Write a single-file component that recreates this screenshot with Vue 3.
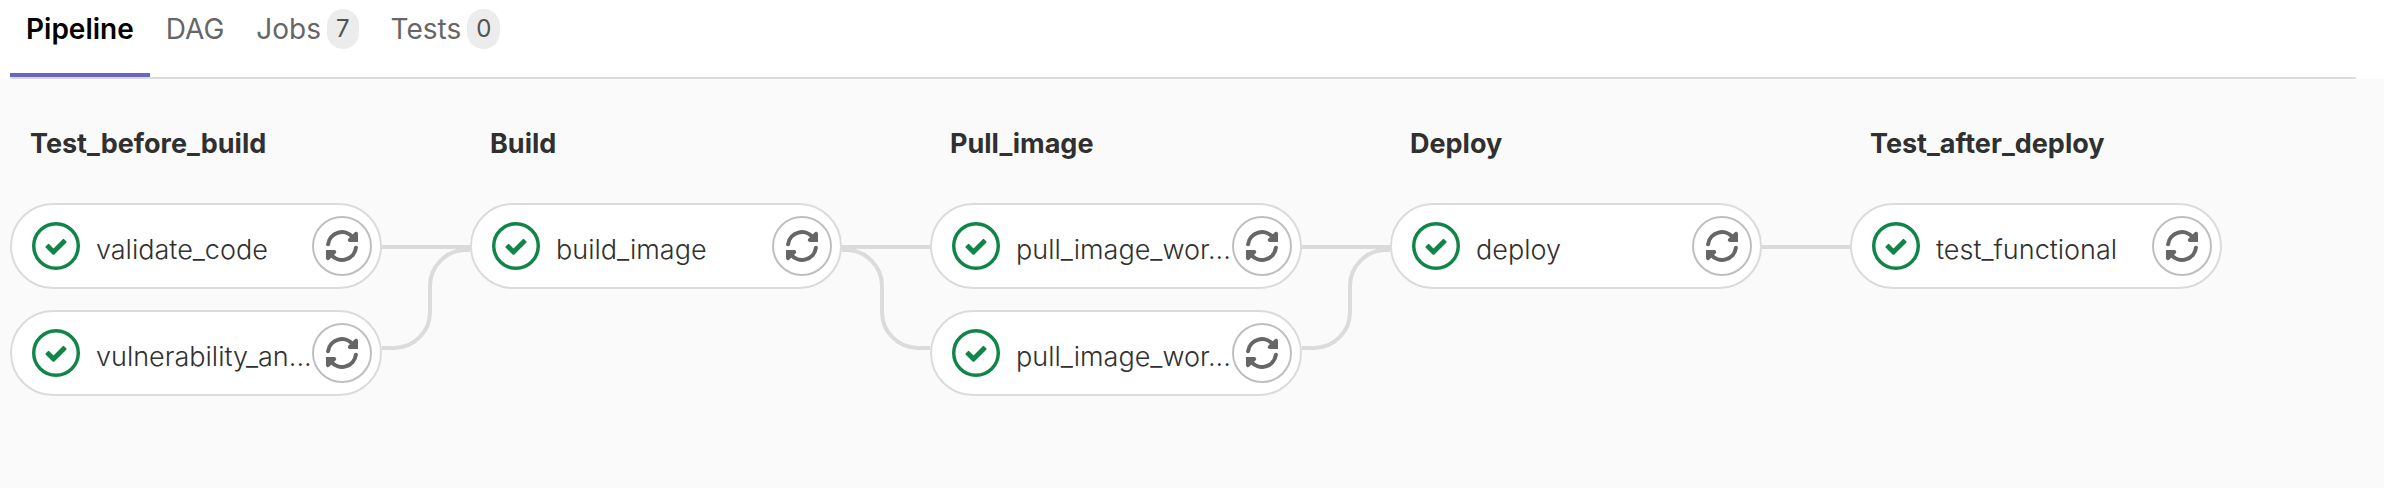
<script setup>
import { ref } from 'vue'

const tabs = [
  { name: 'Pipeline' },
  { name: 'DAG' },
  { name: 'Jobs', count: 7 },
  { name: 'Tests', count: 0 }
]
const active = ref('Pipeline')

const straight = 'M0 44H88'
const merge = 'M0 145H12A36 36 0 0 0 48 109V83A36 36 0 0 1 84 47H88'
const fork = 'M0 47H4A36 36 0 0 1 40 83V109A36 36 0 0 0 76 145H88'

const stages = [
  { name: 'Test_before_build', jobs: ['validate_code', 'vulnerability_an...'], links: [straight, merge] },
  { name: 'Build', jobs: ['build_image'], links: [straight, fork] },
  { name: 'Pull_image', jobs: ['pull_image_wor...', 'pull_image_wor...'], links: [straight, merge] },
  { name: 'Deploy', jobs: ['deploy'], links: [straight] },
  { name: 'Test_after_deploy', jobs: ['test_functional'], links: [] }
]
</script>

<template>
  <div class="page">
    <nav class="tabs">
      <a
        v-for="tab in tabs"
        :key="tab.name"
        href="#"
        class="tab"
        :class="{ active: active === tab.name }"
        @click.prevent="active = tab.name"
      >
        <span>{{ tab.name }}</span>
        <span v-if="tab.count !== undefined" class="badge">{{ tab.count }}</span>
      </a>
    </nav>

    <main class="graph">
      <template v-for="stage in stages" :key="stage.name">
        <section class="stage">
          <h2 class="title">{{ stage.name }}</h2>
          <ul class="jobs">
            <li v-for="(job, index) in stage.jobs" :key="index" class="job">
              <a href="#" class="link" @click.prevent>
                <svg class="status" viewBox="0 0 14 14" aria-hidden="true">
                  <circle cx="7" cy="7" r="6.5" fill="none" stroke="#108548" />
                  <path fill="#108548" d="M6.278 7.697L5.045 6.464a.296.296 0 0 0-.42-.002l-.613.614a.298.298 0 0 0 .002.42l1.91 1.909a.5.5 0 0 0 .703.005l.265-.265L9.997 6.04a.291.291 0 0 0-.009-.408l-.614-.614a.29.29 0 0 0-.408-.009L6.278 7.697z" />
                </svg>
                <span class="name">{{ job }}</span>
              </a>
              <button type="button" class="retry" :aria-label="'Retry ' + job">
                <svg viewBox="0 0 32 32" aria-hidden="true">
                  <g v-for="turn in [0, 180]" :key="turn" :transform="`rotate(${turn} 16 16)`">
                    <path d="M2.1 14.2A14 14 0 0 1 27 7.5" fill="none" stroke="#666" stroke-width="4" stroke-linecap="round" />
                    <path d="M32 3.4V12H23.6A1.9 1.9 0 0 1 22.3 8.8L25 6L28.6 2.4A2 2 0 0 1 32 3.4Z" fill="#666" />
                  </g>
                </svg>
              </button>
            </li>
          </ul>
        </section>
        <svg v-if="stage.links.length" class="links" viewBox="0 0 88 194" aria-hidden="true">
          <path v-for="d in stage.links" :key="d" :d="d" />
        </svg>
      </template>
    </main>
  </div>
</template>

<style>
body {
  margin: 0;
  background: #fafafa;
}
</style>

<style scoped>
.page {
  min-height: 100vh;
  background: linear-gradient(#fff, #fff) top / 100% 79px no-repeat #fafafa;
  color: #303030;
  font-family: Inter, "Liberation Sans", sans-serif;
  font-size: 27px;
}
.tabs {
  display: flex;
  margin: 0 28px 0 10px;
  border-bottom: 2px solid #dbdbdb;
  font-size: 28px;
}
.tab {
  display: flex;
  gap: 6px;
  padding: 9px 16px 24px;
  border-bottom: 4px solid transparent;
  color: #666;
  line-height: 40px;
  text-decoration: none;
}
.tab.active {
  border-bottom-color: #6666c4;
  color: #000;
  font-weight: 600;
}
.badge {
  padding: 0 9px;
  border-radius: 20px;
  background: #ececec;
  color: #525252;
  font-size: 24px;
}
.graph {
  display: flex;
  padding: 44px 10px;
}
.stage {
  flex: 0 1 372px;
  min-width: 0;
}
.title {
  margin: 0 0 38px;
  padding-left: 20px;
  font-size: 27px;
  font-weight: 700;
  line-height: 42px;
}
.jobs {
  display: grid;
  grid-template-columns: minmax(0, 1fr);
  gap: 21px;
  margin: 0;
  padding: 0;
  list-style: none;
}
.job {
  display: flex;
  align-items: center;
  box-sizing: border-box;
  height: 86px;
  padding: 0 8px 0 20px;
  border: 2px solid #dbdbdb;
  border-radius: 44px;
  background: #fff;
}
.link {
  display: flex;
  flex: 1;
  align-items: center;
  gap: 16px;
  min-width: 0;
  color: #303030;
  text-decoration: none;
}
.status {
  flex: none;
  width: 48px;
  height: 48px;
}
.name {
  flex: 1;
  min-width: 0;
  padding-top: 8px;
  font-weight: 300;
  line-height: 40px;
  white-space: nowrap;
}
.retry {
  display: grid;
  flex: none;
  place-items: center;
  box-sizing: border-box;
  width: 60px;
  height: 60px;
  padding: 0;
  border: 2px solid #bfbfbf;
  border-radius: 50%;
  background: #fff;
}
.retry svg {
  width: 32px;
  height: 32px;
}
.links {
  flex: none;
  width: 88px;
  height: 194px;
  margin-top: 80px;
  fill: none;
  stroke: #dbdbdb;
  stroke-width: 4px;
}
</style>
